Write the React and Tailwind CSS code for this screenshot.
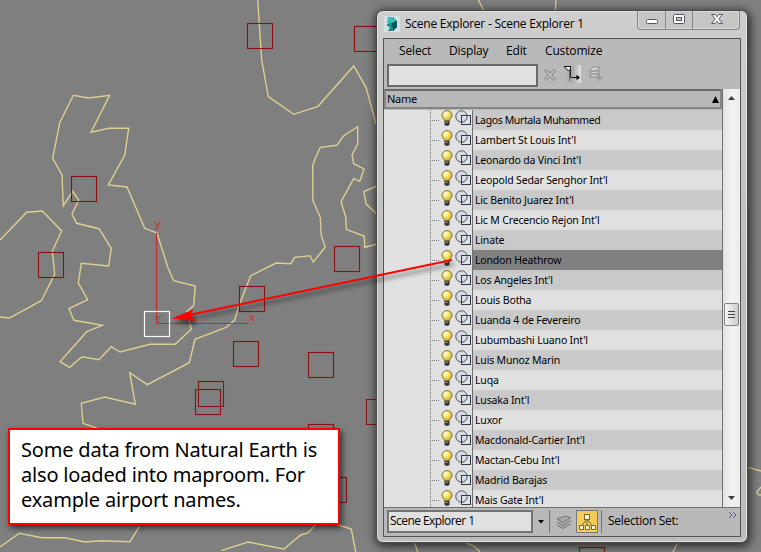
import React from "react";

const airports = [
  "Lagos Murtala Muhammed",
  "Lambert St Louis Int'l",
  "Leonardo da Vinci Int'l",
  "Leopold Sedar Senghor Int'l",
  "Lic Benito Juarez Int'l",
  "Lic M Crecencio Rejon Int'l",
  "Linate",
  "London Heathrow",
  "Los Angeles Int'l",
  "Louis Botha",
  "Luanda 4 de Fevereiro",
  "Lubumbashi Luano Int'l",
  "Luis Munoz Marin",
  "Luqa",
  "Lusaka Int'l",
  "Luxor",
  "Macdonald-Cartier Int'l",
  "Mactan-Cebu Int'l",
  "Madrid Barajas",
  "Mais Gate Int'l",
];

const coastlines = [
  "73.3,95.3 88.3,98 109.7,95.3 91,132.3 109,128.2 128.7,128.3 124.7,155.3 108.3,185 127,187 144.7,228.3 157,233 162.3,250 168,267.7 173.7,280.7 195.3,286 193.7,305.3 187,311.5 191.3,329.3 175,344.3 150,344.3 120,352 111.3,346.7 99,359.7 82,356.7 69.7,367.3 60,361.7 86.7,331.7 102.3,325.3 74,320.3 69,308.7 87.7,299.7 78.3,283 81.3,263.3 108.7,266 111.3,248.3 99,228.7 76.7,223.3 72,214.3 78.7,200 72.7,191.3 63.3,205.7 62,175 52.7,158.3 59.7,122.7 73.3,95.3",
  "0,240 26.7,212.3 42.3,211 61.7,231 52.3,251 54.7,274 41.3,300.7 9.3,318 0,317",
  "377,244 364.7,247.3 364.3,236.3 346.3,229.3 345.7,216.7 341,201.7 353.7,178.7 359.7,181.3 364,169 353.7,163.7 352,155 357.7,144 357.7,126.7 343.3,136 337,145.3 320.3,147.3 315.3,158.3 312.7,165.7 312.9,200.7 320.3,217.3 321.3,235.7 325.3,247 313.3,262 310,255.7 294.7,257.3 291,263.7 276,263 250.7,275.7 239.3,304.7 234.7,320 226,327.3 195,339.3 189.3,362.7 147.3,384.7 129.7,372.7 135.3,404.3 104.7,397 81.3,403.3 83,423.3 96.7,428",
  "139.3,526.7 130,541.7 100,540.7 85,542 65,537.7 41.7,537.7 19.3,533.3 0,547",
  "377,186 363.7,191.7 366.3,204.3 377,214",
  "257.7,0 259.7,30 261.7,60 268.3,96.7 293.7,114.3 318,106.3 353.7,66 366,87.3 376,124",
  "221.3,550.7 248,542 284,549 300.7,535 308,533 317,523",
  "337,524.5 351.3,529 355.7,552",
  "478.3,0 484,11",
  "556,0 555.3,11",
  "414.3,542 417.7,552",
  "464,542 474,546 480,552",
  "678,542 673,552",
  "747,467 761,471",
  "761,487 756.7,492.3 758.3,494.7 761,495",
];

const markers = [
  [71.5, 176.5], [38.5, 252.5], [247.5, 23.5], [354.5, 26.5], [334.5, 246.5],
  [239.5, 286.5], [233.5, 341.5], [308.5, 352.5], [198.5, 381.5], [195.5, 389.5],
  [366.5, 399.5], [308.5, 424.5], [321.5, 477.5], [579.5, 547.5],
];

function Viewport() {
  return (
    <svg className="absolute inset-0" width="761" height="552">
      {coastlines.map((p, i) => (
        <polyline key={i} points={p} fill="none" stroke="#dccf92" strokeWidth="1.4" />
      ))}
      {markers.map(([x, y], i) => (
        <rect key={i} x={x} y={y} width="25" height="25" fill="none" stroke="#8a1212" strokeWidth="1.1" />
      ))}
      <path d="M156.5 233V323.5H249" fill="none" stroke="#bd2f2f" strokeWidth="1.2" />
      <text x="155" y="228" fontSize="11" fill="#d02a2a" fontFamily="Liberation Sans, sans-serif">y</text>
      <text x="249" y="321" fontSize="11" fill="#d02a2a" fontFamily="Liberation Sans, sans-serif">x</text>
      <text x="156" y="322" fontSize="10" fill="#606060" fontFamily="Liberation Sans, sans-serif">z</text>
      <rect x="144.5" y="311.5" width="25" height="25" fill="none" stroke="#f8f8f8" strokeWidth="1.2" />
    </svg>
  );
}

function Arrow() {
  return (
    <svg className="absolute inset-0 pointer-events-none" width="761" height="552">
      <g style={{ filter: "drop-shadow(2px 4px 2px rgba(0,0,0,.55))" }}>
        <path d="M452 260L189 315" stroke="#f00" strokeWidth="2" />
        <path d="M171.500 318.500L193.500 309.500L190 315L195.500 321Z" fill="#f00" />
      </g>
    </svg>
  );
}

function Bulb() {
  return (
    <svg width="12" height="16" viewBox="0 0 12 16">
      <defs>
        <radialGradient id="glow" cx=".38" cy=".3" r=".75">
          <stop offset="0" stopColor="#fffef0" />
          <stop offset=".45" stopColor="#f3e468" />
          <stop offset="1" stopColor="#c9a31c" />
        </radialGradient>
      </defs>
      <path d="M6 .6C3 .6 1 2.8 1 5.2C1 7.6 3.6 8.8 3.8 11H8.2C8.4 8.8 11 7.6 11 5.2C11 2.8 9 .6 6 .6Z" fill="url(#glow)" stroke="#7d6a20" strokeWidth=".9" />
      <path d="M3.5 10.8h5v3.4L7.4 15.8H4.6L3.5 14.2Z" fill="#333" />
      <path d="M4 12.3h3" stroke="#b5b5b5" strokeWidth=".8" />
    </svg>
  );
}

function Shapes() {
  return (
    <svg width="17" height="16" viewBox="0 0 17 16">
      <circle cx="6.5" cy="6.5" r="5.7" fill="#d8dde3" stroke="#4e5660" />
      <rect x="6.500" y="5.500" width="9" height="9" fill="#dde2ea" fillOpacity=".75" stroke="#343b48" />
      <path d="M6.500 12.200A5.700 5.700 0 0 0 12.200 6.500" fill="none" stroke="#4e5660" />
    </svg>
  );
}

function Row({ name, index }) {
  const shade = index === 7 ? "bg-[#808080]" : index % 2 ? "bg-[#e1e1e1]" : "bg-[#c9c9c9]";
  const tracking = index === 0 ? "tracking-[-0.38px]" : "tracking-[-0.17px]";
  return (
    <div className="flex h-5 shrink-0">
      <div className="flex w-[89px] shrink-0 border-r border-[#707070] bg-[#e1e1e1] pl-[45px]">
        <svg width="11" height="20" className="shrink-0">
          <path d="M1.5 0V20M3 10.5H10" stroke="#777" strokeDasharray="1 1" />
        </svg>
        <span className="ml-px shrink-0"><Bulb /></span>
        <span className="ml-[2px] shrink-0"><Shapes /></span>
      </div>
      <div className={"flex-1 whitespace-nowrap pl-[2px] leading-5 " + shade + " " + tracking}>{name}</div>
    </div>
  );
}

function TitleBar() {
  return (
    <div className="flex h-[27px] shrink-0 pl-px">
      <svg className="mt-[5px]" width="16" height="16" viewBox="0 0 16 16">
        <rect width="16" height="16" fill="#d5e1e2" />
        <path d="M4 1h5l4 4v6l-4 4H4l2-4-3-1V8l3-1Z" fill="#178d8d" />
        <path d="M4 1h5l3 4-4 2H3Z" fill="#3cbab5" />
        <path d="M8 7l5-2v6l-4 4Z" fill="#075458" />
      </svg>
      <div className="ml-[5px] mt-[3px] whitespace-nowrap font-['Open_Sans','Noto_Sans',sans-serif] text-[12px] leading-5 tracking-[-0.24px]">
        Scene Explorer - Scene Explorer 1
      </div>
      <div className="ml-auto mr-px flex h-[19px] w-[103px] shrink-0 rounded-b-[4px] border border-t-0 border-[#858585] bg-[#c6c6c6] shadow-[inset_0_0_0_1px_#d9d9d9]">
        <div className="w-[28px] shrink-0 border-r border-[#858585]">
          <svg width="27" height="18"><rect x="8.5" y="8.5" width="11" height="4" rx="1" fill="#fff" stroke="#555566" /></svg>
        </div>
        <div className="w-[27px] shrink-0 border-r border-[#858585]">
          <svg width="26" height="18"><rect x="7.500" y="3.500" width="11" height="9" rx="1" fill="#fff" stroke="#555566" /><rect x="10.500" y="6.500" width="5" height="3" fill="#c6c6c6" stroke="#555566" /></svg>
        </div>
        <svg width="46" height="18"><path d="M18.500 3.500H22l2 2.300 2-2.300h3.500L25.800 8l3.700 4.500H26l-2-2.300-2 2.300h-3.500L22.200 8Z" fill="#fff" stroke="#555566" /></svg>
      </div>
    </div>
  );
}

function Toolbar() {
  return (
    <div className="flex h-[27px] shrink-0 pl-[3px] pt-[2px]">
      <div className="h-[23px] w-[151px] border-2 border-[#6a6a6a] bg-[#e1e1e1]" />
      <svg className="ml-[4px] mt-[3px]" width="16" height="16" fill="none" stroke="#858585">
        <path d="M2.5 4l2-1.5L8 6l3.5-3.5 2 1.5-3.7 4 3.7 4-2 1.5L8 10l-3.5 3.5-2-1.5 3.7-4Z" />
      </svg>
      <div className="ml-[6px] mt-px h-[18px] w-[17px] bg-linear-to-r from-[#b9b9b9] via-[#aaa] to-[#e2e2e2]">
        <svg width="17" height="18">
          <path d="M0 1.500h6.500v2L4.500 6Z" fill="#eee" stroke="#111" />
          <path d="M5.500 4V16" stroke="#287ab5" />
          <path d="M6.500 4V12.500H11" fill="none" stroke="#222" />
          <path d="M10 12.500h4" stroke="#000" />
          <path d="M12.500 9.700v5.600L16 12.500Z" fill="#000" />
        </svg>
      </div>
      <svg className="ml-[6px] mt-px" width="18" height="18" fill="#cfcfcf" stroke="#929292">
        <path d="M2 12l4-3h7l-4 3ZM2 9l4-3h7L9 9ZM2 6l4-4h7L9 6Z" />
        <path d="M12.500 9.500v7M9 13h7M10 10.500l5 5M15 10.500l-5 5" strokeWidth=".7" />
      </svg>
    </div>
  );
}

function ScrollBar() {
  return (
    <div className="flex w-[18px] shrink-0 flex-col items-center border-l border-[#6f6f6f] bg-linear-to-r from-[#e3e3e3] via-[#f2f2f2] to-[#ededed]">
      <svg className="mt-[7px]" width="7" height="4"><path d="M0 4L3.500 0L7 4Z" fill="#3f3f3f" /></svg>
      <div className="mt-[203px] flex h-[23px] w-[15px] shrink-0 items-center justify-center rounded-[2px] border border-[#858585] bg-linear-to-r from-[#f5f5f5] to-[#cdcdd1]">
        <svg width="7" height="8"><path d="M0 .5H7M0 3.500H7M0 6.500H7" stroke="#444" /></svg>
      </div>
      <svg className="mb-[7px] mt-auto" width="7" height="4"><path d="M0 0L3.500 4L7 0Z" fill="#3f3f3f" /></svg>
    </div>
  );
}

function StatusBar() {
  return (
    <div className="flex h-[29px] shrink-0 border-t border-[#6f6f6f] pl-[3px] pt-[2px]">
      <div className="h-[23px] w-[146px] border-2 border-[#757575] bg-[#e1e1e1] pl-px font-['Open_Sans','Noto_Sans',sans-serif] text-[12px] leading-[17px] tracking-[-0.55px]">
        <span className="tracking-[-0.55px]">Scene Explorer 1</span>
      </div>
      <svg className="ml-[5px] mt-[10px]" width="6" height="4"><path d="M0 0H6L3 3.500Z" fill="#000" /></svg>
      <div className="ml-[5px] h-[23px] w-px bg-[#747474]" />
      <svg className="ml-[6px] mt-[4px]" width="16" height="17" fill="#aaa" stroke="#757575">
        <path d="M1 11l6 3.500 8-5M1 8l6 3.500 8-5M1 5l6 3.500 8-5-6-1.500Z" />
      </svg>
      <div className="ml-[4px] h-[23px] w-[22px] border border-[#777] bg-[#f2cc56]">
        <svg width="20" height="21" fill="#fff7d0" stroke="#756738">
          <path d="M10 8L4.500 15M10 8V15M10 8l5.500 7" fill="none" />
          <rect x="7.500" y="3.500" width="5" height="5" />
          <path d="M2.500 14.500h4v4h-4ZM8.500 14.500h4v4h-4ZM14.500 14.500h4v4h-4Z" />
        </svg>
      </div>
      <div className="ml-[3px] h-[23px] w-px bg-[#747474]" />
      <div className="ml-[6px] mt-px whitespace-nowrap font-['Open_Sans','Noto_Sans',sans-serif] text-[12px] leading-5 tracking-[-0.3px]">Selection Set:</div>
      <svg className="ml-auto mr-[3px] mt-[1px]" width="9" height="8" fill="none" stroke="#55559a">
        <path d="M1 1l3 3-3 3M5 1l3 3-3 3" />
      </svg>
    </div>
  );
}

function ExplorerWindow() {
  return (
    <div className="absolute left-[376px] top-[10px] flex h-[533px] w-[372px] flex-col rounded-[7px] border border-[#484848] bg-linear-to-b from-[#cecece] via-[#bdbdbd] to-[#bcbcbc] px-[6px] pb-[5px] text-black shadow-[1px_2px_8px_2px_rgba(0,0,0,0.6),inset_0_0_0_1px_#e2e2e2]">
      <TitleBar />
      <div className="flex flex-1 flex-col overflow-hidden border border-[#555] bg-[#b9b9b9]">
        <div className="flex h-[23px] shrink-0 pl-[15px] pt-[2px] font-['Open_Sans','Noto_Sans',sans-serif] text-[12px] leading-5 tracking-[-0.15px]">
          <span className="w-[50px]">Select</span>
          <span className="w-[57px]">Display</span>
          <span className="w-[39px]">Edit</span>
          <span>Customize</span>
        </div>
        <Toolbar />
        <div className="flex min-h-0 flex-1 font-['DejaVu_Sans_Condensed','DejaVu_Sans',sans-serif] text-[11px]">
          <div className="flex min-w-0 flex-1 flex-col overflow-hidden">
            <div className="flex h-[20px] shrink-0 items-center justify-between border-2 border-[#858585] border-t-[#686868] bg-[#b8b8b8] pl-px font-['Noto_Sans',sans-serif] tracking-[-0.3px]">
              Name
              <svg className="mr-px" width="7" height="7"><path d="M0 7L3.500 0L7 7Z" fill="#000" /></svg>
            </div>
            <div className="flex flex-1 flex-col overflow-hidden pt-px font-['Noto_Sans',sans-serif] text-[10.5px]">
              {airports.map((name, i) => <Row key={name} name={name} index={i} />)}
            </div>
          </div>
          <ScrollBar />
        </div>
        <StatusBar />
      </div>
    </div>
  );
}

export default function App() {
  return (
    <main className="relative h-[552px] w-[761px] overflow-hidden bg-[#7f7f7f]">
      <Viewport />
      <div className="absolute left-[8px] top-[428px] h-[97px] w-[332px] whitespace-nowrap border-2 border-[#f00] bg-white pl-[11px] pt-[7px] font-['Noto_Sans',sans-serif] text-[20px] leading-[25px] tracking-[-0.18px] text-black shadow-[2px_3px_6px_rgba(0,0,0,0.65)]">
        Some data from Natural Earth is<br />also loaded into maproom. For<br />example airport names.
      </div>
      <ExplorerWindow />
      <Arrow />
    </main>
  );
}
